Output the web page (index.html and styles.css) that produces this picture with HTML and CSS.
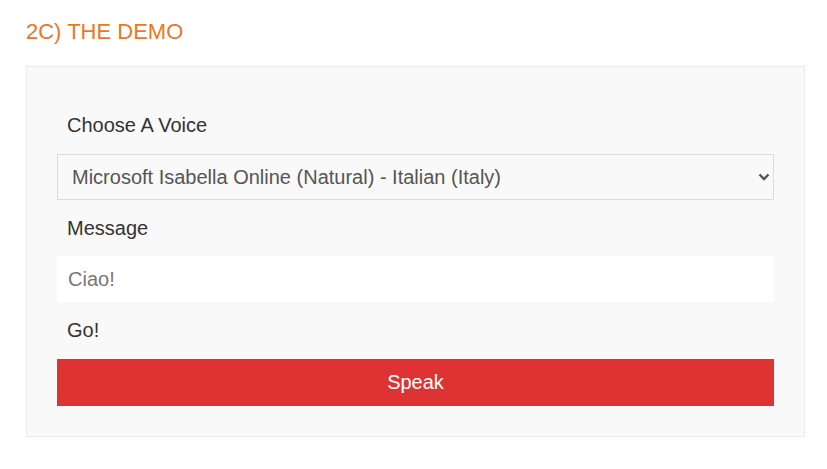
FILE: index.html
```html
<!DOCTYPE html>
<html lang="en">
<head>
    <meta charset="UTF-8">
    <meta name="viewport" content="width=device-width, initial-scale=1.0">
    <title>Text to Speech Demo</title>
    <link rel="stylesheet" href="styles.css">
</head>
<body>

    <h2 class="section-title">2C) THE DEMO</h2>

    <div class="demo-box">
        <label class="demo-label first" for="voice">Choose A Voice</label>
        <div class="select-wrap">
            <select id="voice" class="demo-select">
                <option>Microsoft Isabella Online (Natural) - Italian (Italy)</option>
            </select>
            <svg class="select-arrow" width="12" height="8" viewBox="0 0 12 8">
                <path d="M1.5 1.5 L6 6 L10.5 1.5" fill="none" stroke="#555" stroke-width="2.4"/>
            </svg>
        </div>

        <label class="demo-label" for="message">Message</label>
        <input type="text" id="message" class="demo-input" value="Ciao!" autofocus>

        <label class="demo-label last">Go!</label>
        <button type="button" id="speakBtn" class="demo-button">Speak</button>
    </div>

</body>
</html>
```

FILE: styles.css
```css
body { margin: 0; padding: 0 22px 0 26px; font-family: "Liberation Sans", Arial, sans-serif; background: #fff; }
.section-title { margin: 17px 0 19px; font-size: 22px; line-height: 30px; font-weight: normal; color: #ef7620; }
.demo-box { background: #f9f9f9; border: 1px solid #eaeaea; padding: 30px; }
.demo-label { display: block; height: 28px; line-height: 28px; margin: 14px 0; padding-left: 10px; font-size: 20px; color: #333; }
.demo-label.first, .demo-label.last { margin-bottom: 15px; }
.select-wrap { position: relative; }
.demo-select { display: block; width: 100%; height: 46px; margin: 0; padding: 0 40px 0 14px; font-family: inherit; font-size: 20px; color: #555; background: #f9f9f9; border: 1px solid #dcdcdc; border-radius: 0; appearance: none; -webkit-appearance: none; outline: none; }
.select-arrow { position: absolute; right: 4px; top: 19px; pointer-events: none; }
.demo-input { display: block; box-sizing: border-box; width: 100%; height: 46px; margin: 0; padding: 0 11px; font-family: inherit; font-size: 20px; color: #777; caret-color: #333; background: #fff; border: none; outline: none; }
.demo-button { display: block; width: 100%; height: 47px; margin: 0; padding: 0; font-family: inherit; font-size: 20px; color: #fff; background: #dd3333; border: none; cursor: pointer; }
```
